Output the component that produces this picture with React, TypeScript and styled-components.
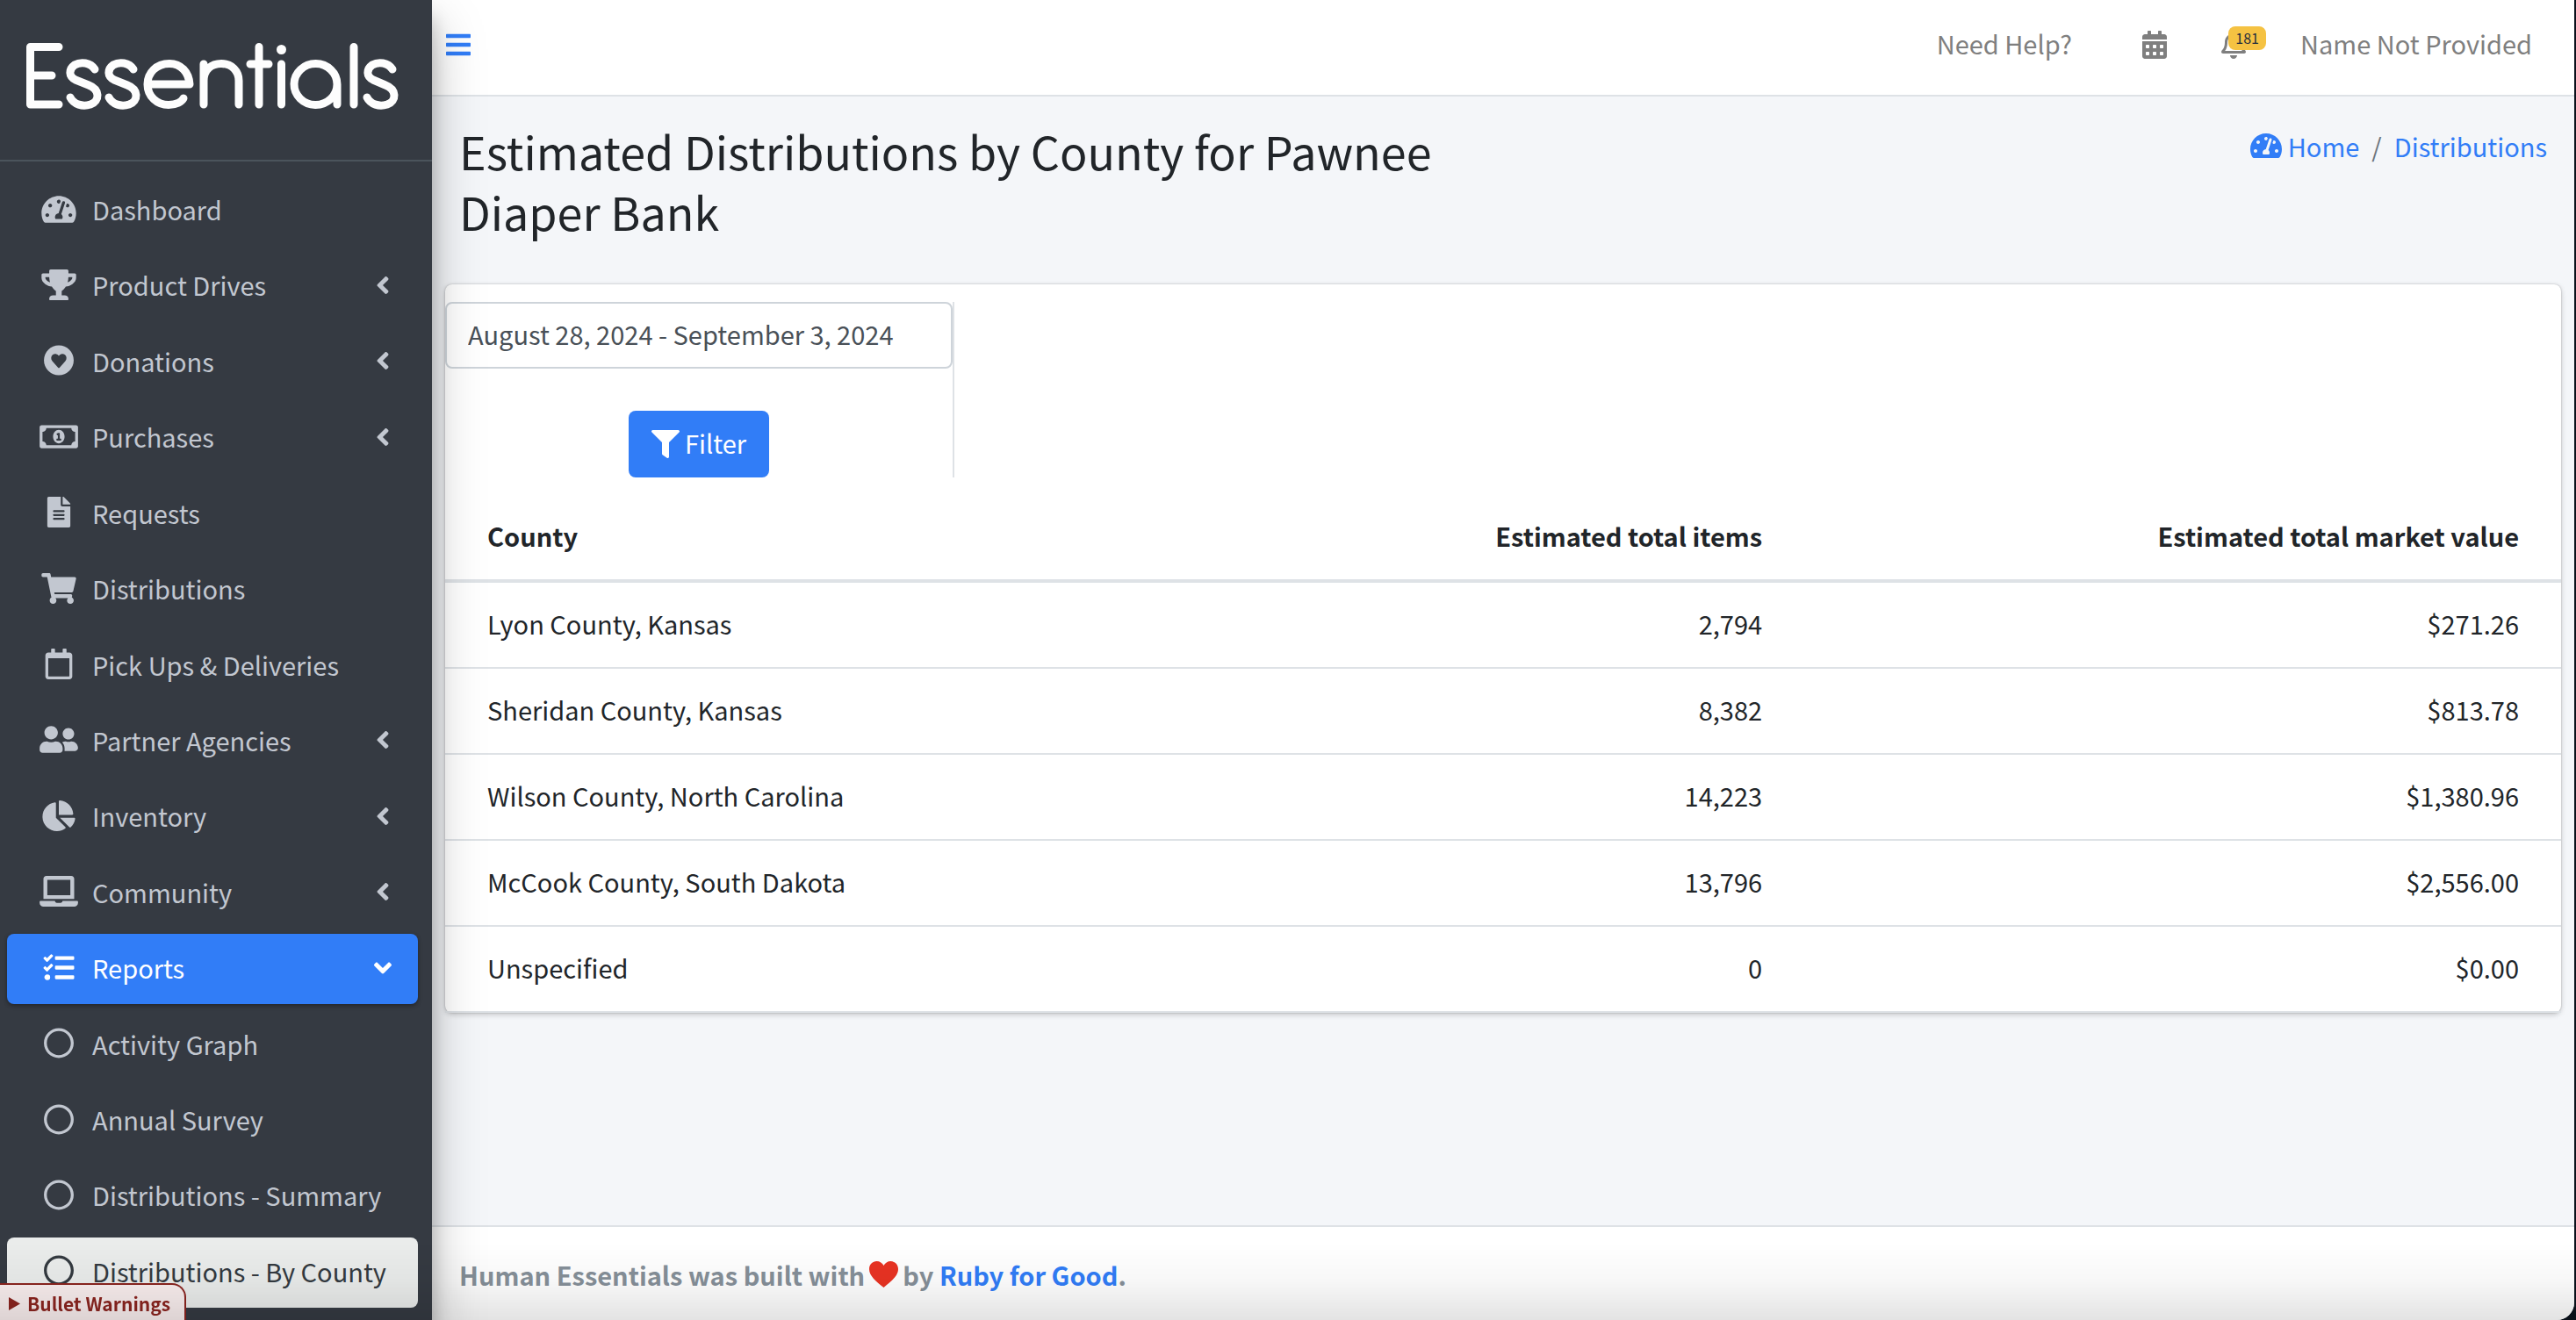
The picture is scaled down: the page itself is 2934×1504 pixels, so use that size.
import React from "react";
import styled, { createGlobalStyle, css } from "styled-components";
import type { IconType } from "react-icons";
import {
  FaAngleDown,
  FaAngleLeft,
  FaBars,
  FaCalendarAlt,
  FaChartPie,
  FaFileAlt,
  FaFilter,
  FaLaptop,
  FaRegBell,
  FaRegCalendar,
  FaRegCircle,
  FaRegMoneyBillAlt,
  FaShoppingCart,
  FaTachometerAlt,
  FaTasks,
  FaTrophy,
  FaUserFriends,
} from "react-icons/fa";

const color = {
  blue: "#317df7",
  sidebar: "#353a42",
  sidebarText: "#c2c7d0",
  ink: "#212529",
  line: "#dee2e6",
  page: "#f4f6f9",
  navText: "#7f7f7f",
  muted: "#869099",
};

const GlobalStyle = createGlobalStyle`
  *, *::before, *::after { box-sizing: border-box; }
  body {
    margin: 0;
    font-family: "Noto Sans CJK JP", "Noto Sans", sans-serif;
    font-size: 29px;
    line-height: 48px;
    color: ${color.ink};
    background: #0b121c;
  }
  a { color: ${color.blue}; text-decoration: none; }
  button, input { font: inherit; }
`;

const Shell = styled.div`
  display: flex;
  min-height: 100vh;
  margin-right: 2px;
  border-bottom-right-radius: 20px;
  overflow: clip;
  background: ${color.page};
`;

const BottomShade = styled.div`
  position: fixed;
  inset: auto 0 0 0;
  z-index: 4;
  height: 88px;
  background: linear-gradient(rgba(0, 0, 0, 0), rgba(0, 0, 0, 0.03) 50%, rgba(0, 0, 0, 0.11));
  pointer-events: none;
`;

const Sidebar = styled.aside`
  display: flex;
  flex-direction: column;
  flex: none;
  width: 492px;
  z-index: 2;
  background: ${color.sidebar};
  box-shadow: 0 28px 56px rgba(0, 0, 0, 0.25), 0 20px 20px rgba(0, 0, 0, 0.22);
`;

const Brand = styled.a`
  display: block;
  height: 184px;
  padding: 46px 0 0 28px;
  border-bottom: 2px solid #4b545c;
`;

const Nav = styled.nav`
  flex: 1;
  padding: 16px 16px 14px 8px;
`;

const NavList = styled.ul`
  display: flex;
  flex-direction: column;
  justify-content: space-between;
  row-gap: 6px;
  height: 100%;
  margin: 0;
  padding: 0;
  list-style: none;
`;

type Tone = "plain" | "open" | "current";

const NavLink = styled.a<{ $tone: Tone }>`
  display: flex;
  align-items: center;
  gap: 11px;
  height: 80px;
  padding: 0 32px;
  border-radius: 8px;
  color: ${color.sidebarText};
  white-space: nowrap;

  ${(p) =>
    p.$tone === "open" &&
    css`
      color: #fff;
      background: ${color.blue};
      box-shadow: 0 2px 6px rgba(0, 0, 0, 0.12), 0 2px 4px rgba(0, 0, 0, 0.24);
    `}
  ${(p) =>
    p.$tone === "current" &&
    css`
      color: #343a40;
      background: #eaeceb;
    `}
`;

const Glyph = styled.span<{ $width?: number }>`
  display: flex;
  justify-content: center;

  svg {
    flex: none;
    width: ${(p) => p.$width ?? 32}px;
    height: 32px;
  }
`;

const NavIcon = styled.span`
  display: flex;
  padding-bottom: 4px;

  svg {
    width: 54px;
    height: 35px;
  }
`;

const Chevron = styled(Glyph)`
  width: 16px;
  padding-bottom: 3px;
`;

const Label = styled.span`
  padding-bottom: 4px;
`;

const NavLabel = styled(Label)`
  flex: 1;
`;

const Main = styled.div`
  display: flex;
  flex-direction: column;
  flex: 1;
  min-width: 0;
`;

const TopBar = styled.header`
  display: flex;
  align-items: center;
  justify-content: space-between;
  height: 110px;
  padding: 0 48px 6px 16px;
  border-bottom: 2px solid ${color.line};
  background: #fff;
`;

const IconButton = styled.button`
  padding: 0;
  border: 0;
  background: none;
  color: ${color.blue};
`;

const TopLinks = styled.nav`
  display: flex;
  align-items: center;
`;

const TopLink = styled.a<{ $gap?: number }>`
  position: relative;
  display: flex;
  margin-left: ${(p) => p.$gap ?? 0}px;
  color: ${color.navText};
`;

const Badge = styled.span`
  position: absolute;
  top: -5px;
  right: -23px;
  padding: 0 8px;
  border-radius: 8px;
  background: #f5c242;
  color: #1f2d3d;
  font-size: 16px;
  font-weight: 400;
  line-height: 27px;
`;

const PageHead = styled.section`
  display: flex;
  justify-content: space-between;
  padding: 27px 31px 49px;
`;

const Title = styled.h1`
  width: 50%;
  margin: 0;
  font-size: 52px;
  font-weight: 400;
  line-height: 69px;
`;

const Crumbs = styled.ol`
  display: flex;
  gap: 14px;
  margin: 0;
  padding: 5px 0 0;
  list-style: none;
  color: #6c757d;
`;

const CrumbLink = styled.a`
  display: flex;
  align-items: center;
  gap: 7px;
`;

const Card = styled.section`
  margin: 0 15px;
  padding-top: 20px;
  border-radius: 8px;
  background: #fff;
  box-shadow: 0 0 2px rgba(0, 0, 0, 0.25), 0 2px 6px rgba(0, 0, 0, 0.2);
`;

const FilterForm = styled.form`
  display: flex;
  flex-direction: column;
  align-items: center;
  gap: 48px;
  width: 580px;
  margin-bottom: 20px;
  border-right: 2px solid ${color.line};
`;

const DateRange = styled.input`
  width: 100%;
  height: 76px;
  padding: 0 24px 4px;
  border: 2px solid #ced4da;
  border-radius: 8px;
  background: #fff;
  color: #495057;
`;

const FilterButton = styled.button`
  display: flex;
  align-items: center;
  gap: 6px;
  height: 76px;
  padding: 0 26px;
  border: 0;
  border-radius: 8px;
  background: ${color.blue};
  color: #fff;
`;

const Table = styled.table`
  width: 100%;
  border-collapse: separate;
  border-spacing: 0;
`;

const cell = css<{ $num?: boolean }>`
  padding: 22px 24px 26px;
  text-align: ${(p) => (p.$num ? "right" : "left")};
  &:first-child { padding-left: 48px; }
  &:last-child { padding-right: 48px; }
`;

const Th = styled.th<{ $num?: boolean }>`
  ${cell}
  border-bottom: 4px solid ${color.line};
  font-weight: 700;
`;

const Td = styled.td<{ $num?: boolean }>`
  ${cell}
  border-bottom: 2px solid ${color.line};
`;

const Footer = styled.footer`
  display: flex;
  align-items: center;
  gap: 5px;
  height: 108px;
  margin-top: auto;
  padding: 2px 31px 0;
  border-top: 2px solid ${color.line};
  background: #fff;
  color: ${color.muted};
  font-weight: 700;
`;

const Warnings = styled.details`
  position: fixed;
  left: 0;
  bottom: 0;
  z-index: 3;
  height: 42px;
  padding: 0 16px 0 10px;
  border: solid #8b2520;
  border-width: 2px 2px 0 0;
  border-radius: 0 16px 0 0;
  background: #f9eeee;
  color: #8b2520;
  font-size: 21px;
  font-weight: 700;
  line-height: 42px;
`;

const WarningsSummary = styled.summary`
  display: flex;
  align-items: center;
  gap: 8px;
  list-style: none;
`;

const HeartCircle: IconType = () => (
  <svg width="1em" height="1em" viewBox="0 0 512 512" fill="currentColor" aria-hidden="true">
    <path
      fillRule="evenodd"
      d="M256 8a248 248 0 1 0 0 496a248 248 0 1 0 0-496zM359 165C332 142 291 146 266 172L256 182L246 172C221 146 180 142 153 165c-31 27-33 75-5 104l97 112c6 6 16 6 22 0l97-112c28-29 26-77-5-104z"
    />
  </svg>
);

const Logo = () => (
  <svg
    width="430"
    height="82"
    viewBox="0 0 430 82"
    fill="none"
    stroke="#fdfdfd"
    strokeWidth="9"
    strokeLinecap="round"
    strokeLinejoin="round"
    role="img"
    aria-label="Essentials"
  >
    <path d="M39 7.500H6.500V73H39M6.500 40H31" />
    <path d="M80 33C75 25 64 24 57 28C50 33 50 41 58 45L73 51C86 56 86 69 75 73C66 76 56 73 52 65" />
    <path d="M124 33C119 25 108 24 101 28C94 33 94 41 102 45L117 51C130 56 130 69 119 73C110 76 100 73 96 65" />
    <path d="M141 50H188C187 36 178 26.500 165 26.500C150 26.500 140 37 140 50C140 64 151 73.500 164 73.500C173 73.500 179 70 181 66" />
    <path d="M204 73V27M204 46C204 33 213 26.500 224 26.500C236 26.500 244 35 244 46V73" />
    <path d="M267 7.500V73M257 27H278M292.500 27V73" />
    <circle cx="292.500" cy="10.500" r="5.500" fill="#fdfdfd" stroke="none" />
    <path d="M356 50A24.500 23.500 0 1 0 331 73.500A24.500 23.500 0 0 0 356 50V73M375 7.500V73" />
    <path d="M419 33C414 25 403 24 396 28C389 33 389 41 397 45L411 51C424 56 424 69 413 73C404 76 394 73 390 65" />
  </svg>
);

const Heart = () => (
  <svg width="33" height="30" viewBox="0 0 33 30" fill="#e93323" role="img" aria-label="love">
    <path d="M16.500 30C8 23 0 17 0 9C0 3.500 4 0 8.500 0C12 0 15 2 16.500 5C18 2 21 0 24.500 0C29 0 33 3.500 33 9C33 17 25 23 16.500 30Z" />
  </svg>
);

const Triangle = () => (
  <svg width="13" height="15" viewBox="0 0 13 15" fill="currentColor" aria-hidden="true">
    <path d="M0 0L13 7.500L0 15Z" />
  </svg>
);

interface NavEntry {
  label: string;
  icon: IconType;
  expandable?: boolean;
  tone?: Tone;
}

const entries: NavEntry[] = [
  { label: "Dashboard", icon: FaTachometerAlt },
  { label: "Product Drives", icon: FaTrophy, expandable: true },
  { label: "Donations", icon: HeartCircle, expandable: true },
  { label: "Purchases", icon: FaRegMoneyBillAlt, expandable: true },
  { label: "Requests", icon: FaFileAlt },
  { label: "Distributions", icon: FaShoppingCart },
  { label: "Pick Ups & Deliveries", icon: FaRegCalendar },
  { label: "Partner Agencies", icon: FaUserFriends, expandable: true },
  { label: "Inventory", icon: FaChartPie, expandable: true },
  { label: "Community", icon: FaLaptop, expandable: true },
  { label: "Reports", icon: FaTasks, expandable: true, tone: "open" },
  { label: "Activity Graph", icon: FaRegCircle },
  { label: "Annual Survey", icon: FaRegCircle },
  { label: "Distributions - Summary", icon: FaRegCircle },
  { label: "Distributions - By County", icon: FaRegCircle, tone: "current" },
];

const rows = [
  ["Lyon County, Kansas", "2,794", "$271.26"],
  ["Sheridan County, Kansas", "8,382", "$813.78"],
  ["Wilson County, North Carolina", "14,223", "$1,380.96"],
  ["McCook County, South Dakota", "13,796", "$2,556.00"],
  ["Unspecified", "0", "$0.00"],
];

export default function App() {
  return (
    <>
      <GlobalStyle />
      <Shell>
        <Sidebar>
          <Brand href="#">
            <Logo />
          </Brand>
          <Nav aria-label="Main">
            <NavList>
              {entries.map(({ label, icon: Icon, expandable, tone = "plain" }) => (
                <li key={label}>
                  <NavLink href="#" $tone={tone}>
                    <NavIcon>
                      <Icon />
                    </NavIcon>
                    <NavLabel>{label}</NavLabel>
                    {expandable && (
                      <Chevron>{tone === "open" ? <FaAngleDown /> : <FaAngleLeft />}</Chevron>
                    )}
                  </NavLink>
                </li>
              ))}
            </NavList>
          </Nav>
        </Sidebar>

        <Main>
          <TopBar>
            <IconButton type="button" aria-label="Toggle menu">
              <Glyph $width={28}>
                <FaBars />
              </Glyph>
            </IconButton>
            <TopLinks aria-label="Account">
              <TopLink href="#">
                <Label>Need Help?</Label>
              </TopLink>
              <TopLink href="#" $gap={80} aria-label="Calendar">
                <Glyph $width={28}>
                  <FaCalendarAlt />
                </Glyph>
              </TopLink>
              <TopLink href="#" $gap={62} aria-label="Notifications">
                <Glyph $width={28}>
                  <FaRegBell />
                </Glyph>
                <Badge>181</Badge>
              </TopLink>
              <TopLink href="#" $gap={62}>
                <Label>Name Not Provided</Label>
              </TopLink>
            </TopLinks>
          </TopBar>

          <PageHead>
            <Title>Estimated Distributions by County for Pawnee Diaper Bank</Title>
            <Crumbs>
              <li>
                <CrumbLink href="#">
                  <Glyph $width={36}>
                    <FaTachometerAlt />
                  </Glyph>
                  Home
                </CrumbLink>
              </li>
              <li>/</li>
              <li>
                <CrumbLink href="#">Distributions</CrumbLink>
              </li>
            </Crumbs>
          </PageHead>

          <Card>
            <FilterForm>
              <DateRange
                type="text"
                aria-label="Date range"
                defaultValue="August 28, 2024 - September 3, 2024"
              />
              <FilterButton type="button">
                <Glyph>
                  <FaFilter />
                </Glyph>
                <Label>Filter</Label>
              </FilterButton>
            </FilterForm>
            <Table>
              <thead>
                <tr>
                  <Th>County</Th>
                  <Th $num>Estimated total items</Th>
                  <Th $num>Estimated total market value</Th>
                </tr>
              </thead>
              <tbody>
                {rows.map(([county, items, value]) => (
                  <tr key={county}>
                    <Td>{county}</Td>
                    <Td $num>{items}</Td>
                    <Td $num>{value}</Td>
                  </tr>
                ))}
              </tbody>
            </Table>
          </Card>

          <Footer>
            <span>Human Essentials was built with</span>
            <Heart />
            <span>
              by <a href="#">Ruby for Good</a>.
            </span>
          </Footer>
        </Main>
      </Shell>
      <Warnings>
        <WarningsSummary>
          <Triangle />
          Bullet Warnings
        </WarningsSummary>
      </Warnings>
      <BottomShade />
    </>
  );
}
